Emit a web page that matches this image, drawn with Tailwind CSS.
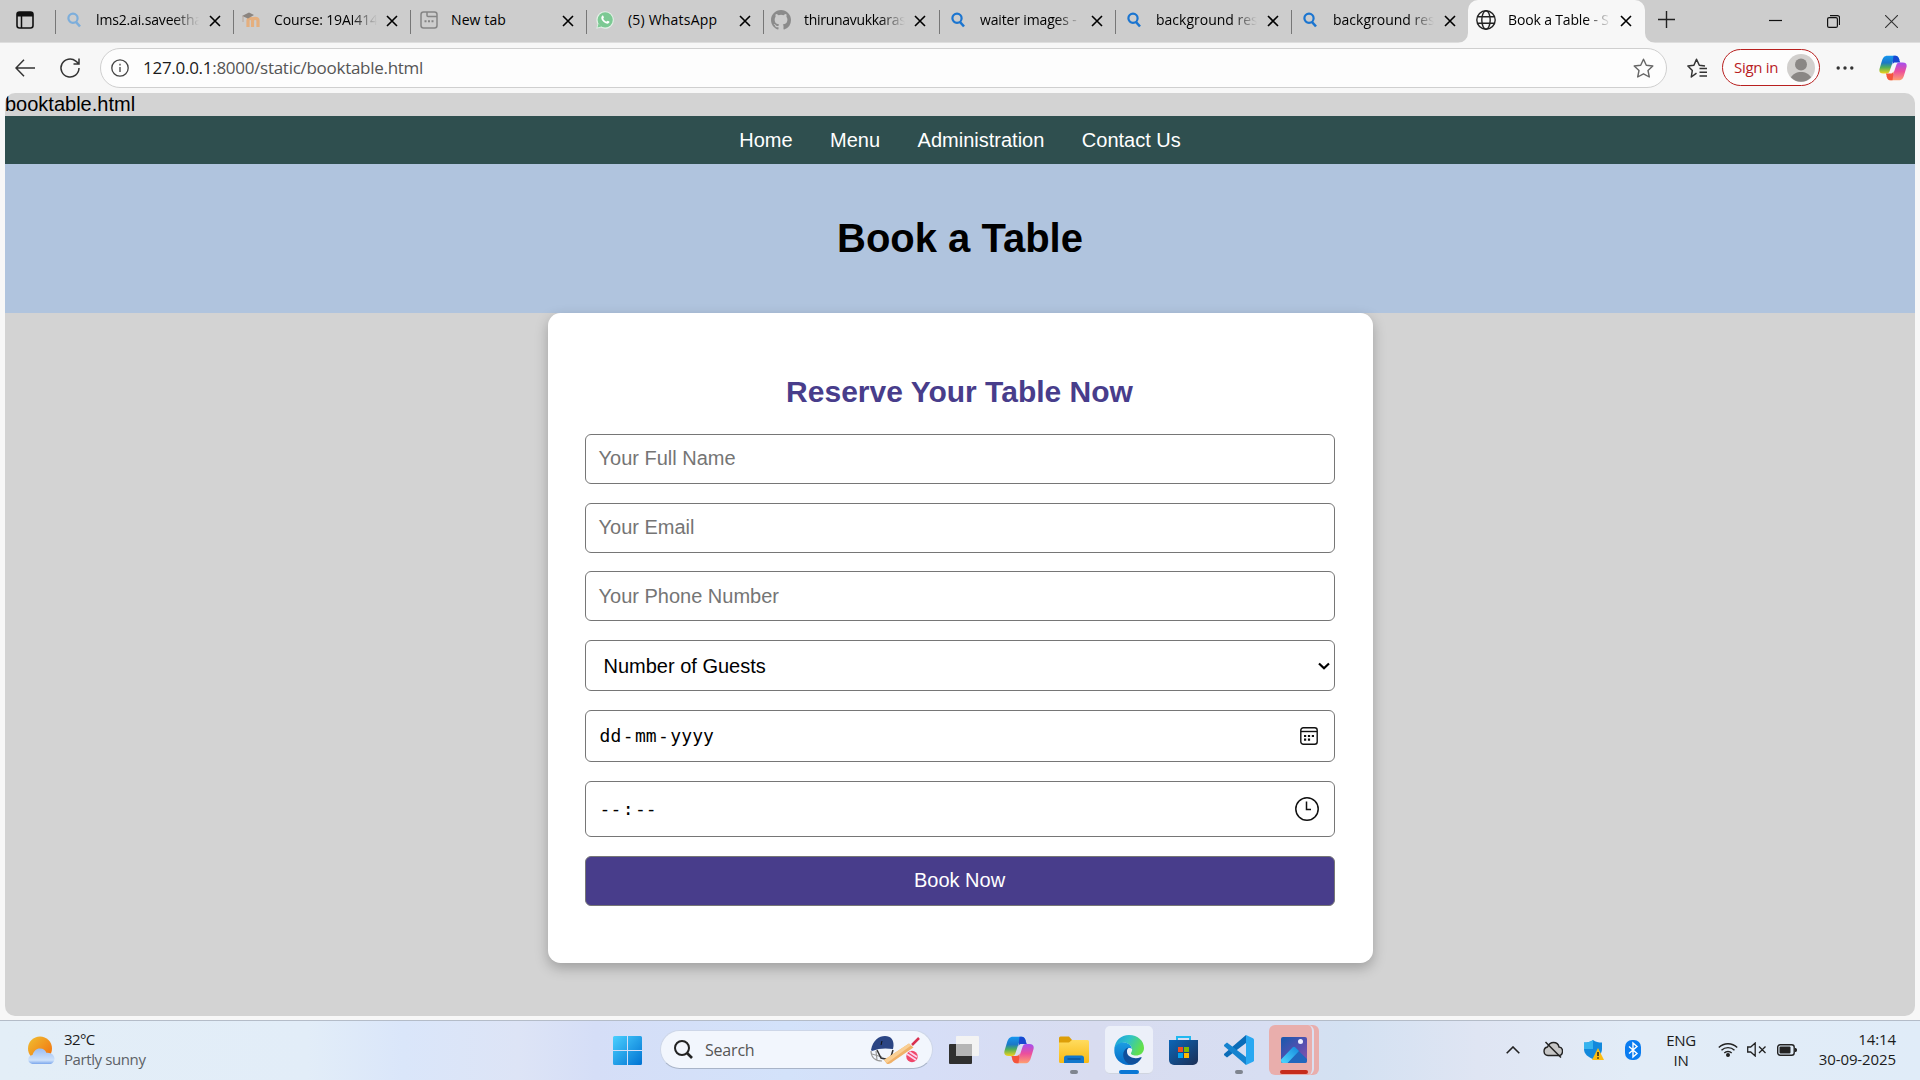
<!DOCTYPE html>
<html lang="en">
<head>
<meta charset="utf-8">
<title>Book a Table</title>
<script src="https://cdn.jsdelivr.net/npm/@tailwindcss/browser@4"></script>
</head>
<body class="w-[1920px] h-[1080px] overflow-hidden bg-[#f7f7f7] flex flex-col font-['Open_Sans','Noto_Sans',sans-serif] text-black">
<svg class="absolute size-0">
  <defs>
    <linearGradient id="cpA" x1="0" y1="0" x2="0" y2="1"><stop offset="0" stop-color="#1597f0"/><stop offset=".4" stop-color="#1b78c8"/><stop offset=".65" stop-color="#4fae5a"/><stop offset="1" stop-color="#f3d21b"/></linearGradient>
    <linearGradient id="cpB" x1="0" y1="0" x2="0" y2="1"><stop offset="0" stop-color="#a44ff0"/><stop offset=".5" stop-color="#ec4f9c"/><stop offset="1" stop-color="#ffa070"/></linearGradient>
    <linearGradient id="edA" x1="0" y1="0" x2="1" y2=".4"><stop offset="0" stop-color="#1a9be0"/><stop offset=".5" stop-color="#2fc2c8"/><stop offset="1" stop-color="#62e04c"/></linearGradient>
    <linearGradient id="edB" x1="0" y1="0" x2="0" y2="1"><stop offset="0" stop-color="#1b9de2"/><stop offset="1" stop-color="#0669c6"/></linearGradient>
    <linearGradient id="win" x1="0" y1="0" x2="1" y2="1"><stop offset="0" stop-color="#4ad0ff"/><stop offset="1" stop-color="#0072d2"/></linearGradient>
    <linearGradient id="sun" x1="0" y1="0" x2="1" y2="1"><stop offset="0" stop-color="#f0c032"/><stop offset="1" stop-color="#f26a0c"/></linearGradient>
    <linearGradient id="cld" x1="0" y1="0" x2="0" y2="1"><stop offset="0" stop-color="#9bbdf4"/><stop offset=".75" stop-color="#cfe2fb"/><stop offset="1" stop-color="#7ba6ec"/></linearGradient>
    <linearGradient id="fld" x1="0" y1="0" x2="0" y2="1"><stop offset="0" stop-color="#ffdb5e"/><stop offset="1" stop-color="#f9b912"/></linearGradient>
    <linearGradient id="sto" x1="0" y1="0" x2="1" y2="1"><stop offset="0" stop-color="#0b66b8"/><stop offset="1" stop-color="#1c2f55"/></linearGradient>
    <linearGradient id="pho" x1="0" y1="0" x2="1" y2="1"><stop offset="0" stop-color="#1559ad"/><stop offset=".6" stop-color="#5b4fb0"/><stop offset="1" stop-color="#8c55a8"/></linearGradient>
    <linearGradient id="mtn" x1="0" y1="1" x2="1" y2="0"><stop offset="0" stop-color="#4fd9ff"/><stop offset="1" stop-color="#1487dc"/></linearGradient>
    <symbol id="x" viewBox="0 0 12 12"><path d="M1 1l10 10M11 1L1 11" stroke="currentColor" stroke-width="1.6" fill="none"/></symbol>
    <symbol id="mag" viewBox="0 0 16 16"><circle cx="7" cy="6.2" r="4.6" fill="none" stroke="currentColor" stroke-width="2.2"/><path d="M10 10l4 4.5" stroke="currentColor" stroke-width="2.6"/></symbol>
    <symbol id="copilot" viewBox="0 0 30 28">
      <path d="M22 5.500C21.300 2.500 20 .7 17.500.7H9C5.500.7 4 3 3 6.500L.6 14.500C-.4 18 1 20 4.500 20H8c2 0 3-1.200 3.600-3.300L14.500 8c.6-1.800 1.500-2.500 3.500-2.500z" fill="url(#cpA)"/>
      <path d="M15.500.7h2C20 .7 21.300 2.500 22 6l.8 2h-5c-2 0-2.700.6-3.300 2.400z" fill="#1747d1"/>
      <path d="M8 22.500c.7 3 2 4.800 4.500 4.800H21c3.500 0 5-2.300 6-5.800l2.400-8C30.400 10 29 8 25.500 8H22c-2 0-3 1.200-3.600 3.300L15.500 20c-.6 1.800-1.500 2.500-3.500 2.500z" fill="url(#cpB)"/>
      <path d="M14.500 27.300h-2C10 27.300 8.700 25.500 8 22l-.6-2H12c2 0 2.900-.8 3.500-2.500L15.500 20z" fill="#f4543c"/>
    </symbol>
  </defs>
</svg>

<!-- tab strip -->
<header class="h-[43px] shrink-0 bg-[#cdcdcd] border-b border-[#dedede] flex text-[14px] tracking-[-0.15px]">
  <div class="w-[55px] flex items-center pl-4 pb-[2px]">
    <svg class="size-[18px]" viewBox="0 0 18 18"><rect x="1" y="1" width="16" height="16" rx="2.500" fill="none" stroke="#111" stroke-width="1.600"/><path d="M1 5.500V3a2 2 0 0 1 2-2h12a2 2 0 0 1 2 2v2.500z" fill="#111"/><path d="M5.500 5v12" stroke="#111" stroke-width="1.500"/></svg>
  </div>
  <div class="w-[178px] flex items-center pb-[3px]"><i class="w-px h-6 mt-[5px] bg-[#777]"></i><svg class="size-4 ml-[10px] text-[#7daedb]"><use href="#mag"/></svg><span class="ml-[14px] w-[103px] overflow-hidden whitespace-nowrap [mask-image:linear-gradient(90deg,#000_75%,transparent)]">lms2.ai.saveetha</span><svg class="size-3 ml-[10px] mt-[3px]"><use href="#x"/></svg></div>
  <div class="w-[177px] flex items-center pb-[3px]"><i class="w-px h-6 mt-[5px] bg-[#777]"></i>
    <svg class="w-5 h-4 ml-2" viewBox="0 0 20 16"><path d="M6 15V8.500c0-2.800 4.500-2.800 4.500 0V15m0-6.500c0-2.800 5.500-2.800 5.500 0V15" fill="none" stroke="#e5af7e" stroke-width="3.200"/><path d="M0 4l7-3.500L12 3 6 6.500z" fill="#8b8580"/><path d="M1 4v6" stroke="#b9a79a" stroke-width="1"/></svg>
    <span class="ml-[12px] w-[103px] overflow-hidden whitespace-nowrap [mask-image:linear-gradient(90deg,#000_75%,transparent)]">Course: 19AI414</span><svg class="size-3 ml-[9px] mt-[3px]"><use href="#x"/></svg></div>
  <div class="w-[176px] flex items-center pb-[3px]"><i class="w-px h-6 mt-[5px] bg-[#777]"></i>
    <svg class="size-[18px] ml-[9px]" viewBox="0 0 18 18" fill="none" stroke="#858585" stroke-width="1.500"><rect x="1" y="1" width="16" height="16" rx="2.500"/><path d="M7 1v3.500a1 1 0 0 0 1 1h9"/><path d="M4.500 10.300h2m1.500 0h2m1.500 0h2" stroke-width="2"/></svg>
    <span class="ml-[13px] w-[103px] tracking-[0.1px]">New tab</span><svg class="size-3 ml-[8px] mt-[3px]"><use href="#x"/></svg></div>
  <div class="w-[177px] flex items-center pb-[3px]"><i class="w-px h-6 mt-[5px] bg-[#777]"></i>
    <svg class="size-[18px] ml-[9px]" viewBox="0 0 18 18"><path d="M.3 17.700l1.200-4.400A8.700 8.700 0 1 1 4.800 16.600z" fill="#e4f1e7"/><circle cx="9.200" cy="8.800" r="7.600" fill="#7cc993"/><path d="M1.500 16.500l1-4 3 3z" fill="#7cc993"/><path d="M6 5c.8-.9 1.400-.3 1.900 1.300.2.700-.9 1-.5 1.700.7 1.300 1.700 2.100 2.900 2.600.7.200.9-1.100 1.500-.9 1.600.7 2 1 1.500 1.900-1 1.800-3.500 1-5.300-.4C5.800 9.400 4.400 6.900 6 5z" fill="#fff"/></svg>
    <span class="ml-[14px] w-[103px] whitespace-nowrap tracking-[0.2px]">(5) WhatsApp</span><svg class="size-3 ml-[8px] mt-[3px]"><use href="#x"/></svg></div>
  <div class="w-[176px] flex items-center pb-[3px]"><i class="w-px h-6 mt-[5px] bg-[#777]"></i>
    <svg class="size-5 ml-[7px]" viewBox="0 0 16 16" fill="#8b8b8b"><path d="M8 0C3.580 0 0 3.580 0 8c0 3.540 2.290 6.530 5.470 7.590.4.070.55-.17.55-.38 0-.19-.01-.82-.01-1.490-2.010.37-2.530-.49-2.690-.94-.09-.23-.48-.94-.82-1.130-.28-.15-.68-.52-.01-.53.63-.01 1.080.58 1.230.82.72 1.210 1.870.87 2.330.66.07-.52.28-.87.51-1.070-1.780-.2-3.640-.89-3.640-3.950 0-.87.31-1.590.82-2.150-.08-.2-.36-1.020.08-2.120 0 0 .67-.21 2.200.82a7.600 7.600 0 0 1 4 0c1.530-1.040 2.200-.82 2.200-.82.44 1.100.16 1.920.08 2.120.51.56.82 1.270.82 2.150 0 3.070-1.870 3.750-3.650 3.950.29.25.54.73.54 1.480 0 1.070-.01 1.930-.01 2.200 0 .21.15.46.55.38A8 8 0 0 0 16 8c0-4.420-3.580-8-8-8z"/></svg>
    <span class="ml-[13px] w-[101px] overflow-hidden whitespace-nowrap tracking-[-0.3px] [mask-image:linear-gradient(90deg,#000_75%,transparent)]">thirunavukkaras</span><svg class="size-3 ml-[9px] mt-[3px]"><use href="#x"/></svg></div>
  <div class="w-[176px] flex items-center pb-[3px]"><i class="w-px h-6 mt-[5px] bg-[#777]"></i><svg class="size-4 ml-[10px] text-[#1b75d0]"><use href="#mag"/></svg><span class="ml-[14px] w-[101px] overflow-hidden whitespace-nowrap [mask-image:linear-gradient(90deg,#000_75%,transparent)]">waiter images -</span><svg class="size-3 ml-[10px] mt-[3px]"><use href="#x"/></svg></div>
  <div class="w-[176px] flex items-center pb-[3px]"><i class="w-px h-6 mt-[5px] bg-[#777]"></i><svg class="size-4 ml-[10px] text-[#1b75d0]"><use href="#mag"/></svg><span class="ml-[14px] w-[101px] overflow-hidden whitespace-nowrap tracking-[0px] [mask-image:linear-gradient(90deg,#000_75%,transparent)]">background res</span><svg class="size-3 ml-[10px] mt-[3px]"><use href="#x"/></svg></div>
  <div class="w-[177px] flex items-center pb-[3px]"><i class="w-px h-6 mt-[5px] bg-[#777]"></i><svg class="size-4 ml-[10px] text-[#1b75d0]"><use href="#mag"/></svg><span class="ml-[15px] w-[101px] overflow-hidden whitespace-nowrap tracking-[0px] [mask-image:linear-gradient(90deg,#000_75%,transparent)]">background res</span><svg class="size-3 ml-[10px] mt-[3px]"><use href="#x"/></svg></div>
  <div class="w-[177px] h-[43px] flex items-center pb-[4px] bg-[#f7f7f7] rounded-t-[10px] relative">
    <svg class="absolute -left-[10px] bottom-0 size-[10px]" viewBox="0 0 10 10"><path d="M10 0v10H0A10 10 0 0 0 10 0z" fill="#f7f7f7"/></svg>
    <svg class="absolute -right-[10px] bottom-0 size-[10px]" viewBox="0 0 10 10"><path d="M0 0v10h10A10 10 0 0 1 0 0z" fill="#f7f7f7"/></svg>
    <svg class="size-5 ml-2" viewBox="0 0 20 20" fill="none" stroke="#222" stroke-width="1.400"><circle cx="10" cy="10" r="9.200"/><ellipse cx="10" cy="10" rx="4.200" ry="9.200"/><path d="M1.500 6.800h17M1.500 13.200h17"/></svg>
    <span class="ml-[12px] w-[103px] overflow-hidden whitespace-nowrap [mask-image:linear-gradient(90deg,#000_75%,transparent)]">Book a Table - S</span><svg class="size-3 ml-[9px] mt-[3px]"><use href="#x"/></svg></div>
  <svg class="size-[17px] ml-[13px] mt-[11px]" viewBox="0 0 17 17" stroke="#222" stroke-width="1.400"><path d="M8.500 0v17M0 8.500h17"/></svg>
  <div class="ml-auto mr-[22px] flex gap-[45px] items-start pt-[15px]">
    <svg class="size-[13px]" viewBox="0 0 13 13" stroke="#111" stroke-width="1.200"><path d="M0 5.500h13"/></svg>
    <svg class="size-[13px]" viewBox="0 0 13 13" stroke="#111" fill="none" stroke-width="1.200"><rect x=".6" y="2.600" width="9.800" height="9.800" rx="1.500"/><path d="M3 .6h7.500a2 2 0 0 1 2 2V10"/></svg>
    <svg class="size-[13px]" viewBox="0 0 13 13" stroke="#333" stroke-width="1.100"><path d="M0 0l13 13M13 0L0 13"/></svg>
  </div>
</header>

<!-- toolbar -->
<div class="h-[50px] shrink-0 flex items-center">
  <svg class="w-5 h-[18px] ml-[15px]" viewBox="0 0 20 18" fill="none" stroke="#333" stroke-width="1.500"><path d="M20 9H1M9 .8L1 9l8 8.200"/></svg>
  <svg class="size-[22px] ml-6" viewBox="0 0 22 22" fill="none" stroke="#333" stroke-width="1.500"><path d="M20 11a9 9 0 1 1-3.200-6.900L20 6.800M20 1.500v5.500h-5.500"/></svg>
  <div class="ml-[19px] w-[1567px] h-10 rounded-full bg-[#fdfdfd] border border-[#cfcfcf] flex items-center pl-[10px] pr-[12px]">
    <svg class="size-[18px]" viewBox="0 0 18 18" fill="none" stroke="#444" stroke-width="1.300"><circle cx="9" cy="9" r="8.200"/><path d="M9 8v5M9 4.800v1.600"/></svg>
    <span class="ml-[14px] pb-[2px] text-[17px] tracking-[-0.28px] text-[#555] leading-none"><span class="text-[#1a1a1a]">127.0.0.1</span>:8000/static/booktable.html</span>
    <svg class="size-[21px] ml-auto" viewBox="0 0 21 21" fill="none" stroke="#666" stroke-width="1.400" stroke-linejoin="round"><path d="M10.500 1.200l2.800 6 6.500.8-4.800 4.500 1.300 6.500-5.800-3.200L4.700 19 6 12.500 1.200 8l6.500-.8z"/></svg>
  </div>
  <svg class="w-[21px] h-5 ml-[20px]" viewBox="0 0 21 20" fill="none" stroke="#333" stroke-width="1.500" stroke-linejoin="round"><path d="M9.500 15.200L4.300 19l1-6.500L.9 8l6-.8L9.500 1.200l2.800 6L18 8M12.500 10.500H20M12.500 14.200H20M12.500 18H20"/></svg>
  <div class="ml-[14px] mb-[1px] w-[98px] h-[37px] rounded-full border-[1.500px] border-[#b8201f] bg-[#fdfdfd] flex items-center pl-[11px] text-[#b8201f] text-[15px] tracking-[-0.3px]">Sign in
    <svg class="size-7 ml-auto mr-[4px]" viewBox="0 0 28 28"><circle cx="14" cy="14" r="14" fill="#d1cfcd"/><circle cx="14" cy="10.500" r="6" fill="#8a8785"/><path d="M4 23.500c3-7.500 17-7.500 20 0a14 14 0 0 1-20 0z" fill="#8a8785"/></svg></div>
  <svg class="w-[18px] h-1 ml-[16px]" viewBox="0 0 18 4" fill="#333"><circle cx="2.200" cy="2" r="1.700"/><circle cx="9" cy="2" r="1.700"/><circle cx="15.800" cy="2" r="1.700"/></svg>
  <svg class="w-[28px] h-[26px] ml-[25px]"><use href="#copilot"/></svg>
</div>

<!-- page -->
<main class="mx-[5px] h-[923px] shrink-0 rounded-[10px] overflow-hidden bg-[#d3d3d3] font-['Liberation_Sans',Arial,sans-serif] text-[20px] leading-[23px] flex flex-col items-center">
  <div class="w-full h-[23px]">booktable.html</div>
  <nav class="w-full h-12 bg-[#2f4f4f] text-white flex items-center justify-center gap-[37.500px]"><span>Home</span><span>Menu</span><span>Administration</span><span>Contact Us</span></nav>
  <div class="w-full h-[149px] pb-[2px] bg-[#b0c4de] flex items-center justify-center text-[40px] leading-[46px] font-bold">Book a Table</div>
  <section class="w-[825px] h-[650px] rounded-[12.500px] bg-white shadow-[0_5px_12.500px_rgba(0,0,0,0.25)] pl-[37px] pr-[38px] pt-[62px] flex flex-col">
    <h2 class="text-center text-[30px] leading-[34px] font-bold text-[#483d8b] mb-[25px]">Reserve Your Table Now</h2>
    <div class="h-[50px] mb-[19px] border border-[#767676] rounded-[6px] flex items-center pl-[13px] pb-[2px] text-[#757575]">Your Full Name</div>
    <div class="h-[50px] mb-[18px] border border-[#767676] rounded-[6px] flex items-center pl-[13px] pb-[2px] text-[#757575]">Your Email</div>
    <div class="h-[50px] mb-[19px] border border-[#767676] rounded-[6px] flex items-center pl-[13px] text-[#757575]">Your Phone Number</div>
    <div class="h-[51px] mb-[19px] border border-[#767676] rounded-[6px] flex items-center pl-[18px] pt-px pr-[4px]">Number of Guests
      <svg class="w-3 h-2 ml-auto" viewBox="0 0 12 8" fill="none" stroke="#000" stroke-width="2.200"><path d="M1 1.500l5 4.800 5-4.800"/></svg></div>
    <div class="h-[52px] mb-[19px] border border-[#767676] rounded-[6px] flex items-center pl-[14px] pr-4 font-['DejaVu_Sans_Mono',monospace] text-[18px] tracking-[0.1px]"><div class="flex pb-[2px]"><span>dd</span><span class="mx-[1.300px]">-</span><span>mm</span><span class="mx-[1.300px]">-</span><span>yyyy</span></div>
      <svg class="size-[18px] ml-auto" viewBox="0 0 18 18" fill="none" stroke="#111" stroke-width="1.400"><rect x=".8" y=".8" width="16.400" height="16.400" rx="2.500"/><path d="M1 4.500h16"/><path d="M4 9h2.200m1.700 0h2.200m1.700 0H14M4 12.600h2.200m1.700 0h2.200" stroke-width="2.200"/></svg></div>
    <div class="h-[56px] mb-[19px] border border-[#767676] rounded-[6px] flex items-center pl-[14px] pr-[15px] font-['DejaVu_Sans_Mono',monospace] text-[18px] tracking-[0.1px]"><div class="flex pb-[2px]"><span>--</span><span class="mx-[1.300px]">:</span><span>--</span></div>
      <svg class="size-6 ml-auto" viewBox="0 0 24 24" fill="none" stroke="#111" stroke-width="1.500"><circle cx="12" cy="12" r="11.200"/><path d="M11.500 4.500v8H16"/></svg></div>
    <div class="h-[50px] border border-[#767676] rounded-[6px] bg-[#483d8b] text-white flex items-center justify-center pb-[2px]">Book Now</div>
  </section>
</main>

<!-- taskbar -->
<footer class="mt-1 h-[60px] shrink-0 border-t border-[#b4bcc8] bg-[linear-gradient(90deg,#e3eef7_0%,#e2edf8_16%,#dae6fa_21%,#dde4f6_27%,#d5def7_31%,#d3e2fa_41%,#d6def7_48%,#d8dcf0_57%,#d7def2_66%,#d3e1f2_70%,#dfe5f3_77%,#e2ecf7_85%,#e0ecf8_100%)] flex text-[15px] leading-5 text-[#1c1c1c]">
  <svg class="w-7 h-7 ml-[27px] mt-[15px]" viewBox="0 0 28 28"><circle cx="13" cy="12.500" r="12" fill="url(#sun)"/><path d="M6 28a4.500 4.500 0 0 1-.5-9C7 15 9 12.500 13 12.500c3.500 0 5.500 2 6.300 4.200 5-.6 8.200 2.500 8.200 5.800 0 3.500-2.500 5.500-5 5.500z" fill="url(#cld)"/></svg>
  <div class="ml-[9px] pt-[8px] w-[549px]"><div class="tracking-[-0.6px]">32°C</div><div class="text-[#5c6166] tracking-[-0.4px]">Partly sunny</div></div>
  <svg class="size-[29px] mt-[15px]" viewBox="0 0 29 29" fill="url(#win)"><path d="M0 1.500A1.500 1.500 0 0 1 1.500 0H14v14H0zM15 0h12.500A1.500 1.500 0 0 1 29 1.500V14H15zM0 15h14v14H1.500A1.500 1.500 0 0 1 0 27.500zM15 15h14v12.500a1.500 1.500 0 0 1-1.500 1.500H15z"/></svg>
  <div class="ml-[18px] mt-[9px] w-[273px] h-[39px] rounded-full bg-[#f2f6fd] border border-[#cdd6e8] border-b-[#a9b4c8] flex items-center pl-[13px] pr-3 text-[16px] text-[#555] tracking-[-0.2px]">
    <svg class="size-[19px]" viewBox="0 0 19 19" fill="none" stroke="#222"><circle cx="8" cy="8" r="7" stroke-width="2"/><path d="M13 13l5 5" stroke-width="2.600"/></svg>
    <span class="ml-[12px]">Search</span>
    <svg class="w-[50px] h-[30px] ml-auto" viewBox="0 0 50 30"><path d="M1 16c0 6 4 10 11 10M2 19l10 3M6 16l1 9" stroke="#9a9a9a" fill="none" stroke-width="1.200"/><path d="M7 15l4 8 9 2 3-10" stroke="#333" fill="none" stroke-width="1.500"/><path d="M1 15C3 5 9 1 15 1c6 0 9 4 8.500 10L23 14c-7-1-14-1-21 2z" fill="#2b4584"/><path d="M12 6l-1 4" stroke="#111"/><path d="M42 10l7-7" stroke="#d8304f" stroke-width="2.500"/><path d="M39 8.500l4.500 4L23 26.500c-2 2-4 2.500-6 2.500l-3-4z" fill="#f0b168"/><path d="M39 8.500l2 2L17 28l-3-3z" fill="#f9cf94"/><circle cx="42" cy="21.500" r="5.700" fill="#f0466a"/><path d="M37 19l9 6M39.500 17l7.500 5" stroke="#fbd3ee" stroke-width="1.800"/></svg>
  </div>
  <svg class="w-[30px] h-7 ml-4 mt-[15px]" viewBox="0 0 30 28"><rect x="0" y="8" width="23" height="20" rx="1" fill="#30302f"/><rect x="7" y="0" width="23" height="20" rx="1" fill="#f3f3f3"/><path d="M7 8h16v12H7z" fill="#b5b5b5"/></svg>
  <svg class="w-[30px] h-7 ml-[25px] mt-[15px]"><use href="#copilot"/></svg>
  <div class="ml-[25px] mt-[15px] w-[30px] h-11 relative">
    <svg class="w-[30px] h-7" viewBox="0 0 30 28"><path d="M0 2a1.500 1.500 0 0 1 1.500-1.500H10L13 4v4H0z" fill="#dd9e08"/><path d="M0 6.500h10l3-2.500h15.500A1.500 1.500 0 0 1 30 5.500v20a1.500 1.500 0 0 1-1.500 1.500h-27A1.500 1.500 0 0 1 0 25.500z" fill="url(#fld)"/><path d="M5 27v-5a2.500 2.500 0 0 1 2.500-2.500h15A2.500 2.500 0 0 1 25 22v5z" fill="#1277cc"/><path d="M8.500 23h13" stroke="#0b4f94" stroke-width="1.300"/></svg>
    <i class="absolute left-[11px] top-[34px] w-2 h-1 rounded-full bg-[#7f858f]"></i></div>
  <div class="ml-4 mt-[5px] w-12 h-[48px] rounded-[5px] bg-[#ecf0f9] border-b border-[#d0d5e0] relative">
    <svg class="size-[30px] ml-[9px] mt-[9px]" viewBox="0 0 30 30"><path d="M.3 14C1 5.500 7 0 15 0c9 0 15 6 15 13 0 5-4 7.500-8 7.500-3.500 0-5.500-1.200-5-2.500 1-2 1.500-3 .8-5C16.500 9 12 7 8 8 4.500 8.800 1.500 11 .3 14z" fill="url(#edA)"/><path d="M.3 15C.5 10 5 7.500 9.500 7.500c5 0 8 3 8.400 6.500-2.500-2.500-6 0-5.700 4 .4 6 6 10 12.800 8.500-3 2.500-6 3.500-10 3.500C6 30 0 23 .3 15z" fill="url(#edB)"/><path d="M14.500 12.200c-5 2-6.500 7-4.500 11.500 2 4.500 6.500 6.800 10.500 5.300 3.500-1.300 6-4 7-6 .5-1-.3-1-1-.7-5.500 2.200-13 .2-13.500-5.300-.1-2 .3-3.500 1.500-4.800z" fill="#11509c"/></svg>
    <i class="absolute left-[14px] bottom-[-1px] w-5 h-1 rounded-full bg-[#0a77d5]"></i></div>
  <svg class="w-[29px] h-[30px] ml-4 mt-[14px]" viewBox="0 0 29 30"><path d="M8 6V2h13v4" fill="none" stroke="#22b8f0" stroke-width="2"/><path d="M0 5h29v20a5 5 0 0 1-5 5H5a5 5 0 0 1-5-5z" fill="url(#sto)"/><path fill="#f25022" d="M9 12h5v5H9z"/><path fill="#7fba00" d="M15 12h5v5h-5z"/><path fill="#00a4ef" d="M9 18h5v5H9z"/><path fill="#ffb900" d="M15 18h5v5h-5z"/></svg>
  <div class="ml-[26px] mt-[14px] w-[30px] h-11 relative">
    <svg class="size-[30px]" viewBox="0 0 30 30"><path d="M22 8L3 22.500l-2.500-2c-.8-.7-.6-1.500 0-2L22 0z" fill="#0a6cb8"/><path d="M22 22L3 7.500.500 9.500c-.8.700-.6 1.500 0 2L22 30z" fill="#1583cf"/><path d="M22 0l7 3.200c.7.400 1 .9 1 1.600v20.400c0 .7-.3 1.200-1 1.600L22 30z" fill="#29a8f2"/></svg>
    <i class="absolute left-[11px] top-[35px] w-2 h-1 rounded-full bg-[#7f858f]"></i></div>
  <div class="ml-[15px] mt-1 w-[50px] h-[50px] relative">
    <div class="absolute right-0 top-0 w-3 h-[50px] rounded-r-[6px] bg-[#e9aeac]"></div>
    <div class="absolute left-0 top-0 w-[45px] h-[50px] rounded-[6px] bg-[#e9aeac] border-r-2 border-[#dce0f0]"></div>
    <svg class="absolute left-3 top-3 size-[26px]" viewBox="0 0 26 26"><rect width="26" height="26" rx="2" fill="url(#pho)"/><circle cx="19.500" cy="4.500" r="2.500" fill="#eef"/><path d="M0 23l11.500-12a2 2 0 0 1 3 0L26 22v2a2 2 0 0 1-2 2H2a2 2 0 0 1-2-2z" fill="#2167bd"/><path d="M0 22.500l11.500-12a2 2 0 0 1 3 0l3.500 3.500L6.500 26H2a2 2 0 0 1-2-2z" fill="url(#mtn)"/></svg>
    <i class="absolute left-[11px] bottom-[1px] w-7 h-1 rounded-full bg-[#c62b1c]"></i>
  </div>
  <div class="ml-auto mr-6 flex h-[59px]">
    <svg class="w-[14px] h-2 mt-[25px]" viewBox="0 0 14 8" fill="none" stroke="#222" stroke-width="1.600"><path d="M.7 7.300L7 1l6.300 6.300"/></svg>
    <svg class="w-5 h-[17px] ml-[23px] mt-[20px]" viewBox="0 0 20 17"><path d="M5 14.500a4.300 4.300 0 0 1-.5-8.500C6 2.500 8 1.500 10.500 1.500c3 0 5 2 5.500 4.500 5 .5 4.500 8.500-.5 8.500z" fill="#c6c6c6" stroke="#222" stroke-width="1.400"/><path d="M2.500 1l15.500 15.500" stroke="#222" stroke-width="1.500"/></svg>
    <svg class="w-5 h-5 ml-[21px] mt-[19px]" viewBox="0 0 20 20"><path d="M9 0c2.500 2 5.500 2.500 9 2.500V9c0 5-4 8-9 10-5-2-9-5-9-10V2.500C3.500 2.500 6.500 2 9 0z" fill="#1389dc"/><path d="M9 0v9H0V2.500C3.500 2.500 6.500 2 9 0z" fill="#35b3ee"/><path d="M14 8l6 12H8z" fill="#fdbd10"/><path d="M14 12v4M14 17.200v1.600" stroke="#222" stroke-width="1.500"/></svg>
    <svg class="w-4 h-5 ml-[21px] mt-[19px]" viewBox="0 0 16 20"><rect width="16" height="20" rx="7" fill="#0a7cf0"/><path d="M4 6.500l8 7L8 17V3l4 3.500-8 7" fill="none" stroke="#fff" stroke-width="1.400"/></svg>
    <div class="ml-[25px] pt-[9px] w-[30px] text-center tracking-[-0.3px]">ENG<br>IN</div>
    <svg class="w-5 h-[15px] ml-[22px] mt-[21px]" viewBox="0 0 20 15" fill="none" stroke="#222" stroke-width="1.400"><path d="M.8 5.500a13 13 0 0 1 18.400 0M3.500 8.300a9.200 9.200 0 0 1 13 0M6.300 11a5.300 5.300 0 0 1 7.400 0"/><circle cx="10" cy="13" r="1.300" fill="#222"/></svg>
    <svg class="w-5 h-[15px] ml-[9px] mt-[21px]" viewBox="0 0 20 15" fill="none" stroke="#222" stroke-width="1.300"><path d="M.7 5v5h3l4.500 4V1L3.700 5zM12 4.500l6.500 6.500M18.500 4.500L12 11"/></svg>
    <svg class="w-5 h-3 ml-[10px] mt-[23px]" viewBox="0 0 20 12"><rect x=".7" y=".7" width="16.500" height="10.600" rx="2.500" fill="none" stroke="#222" stroke-width="1.400"/><rect x="2.500" y="2.500" width="11" height="7" rx="1" fill="#222"/><path d="M18 4h.5c2 0 2 4 0 4H18z" fill="#222"/></svg>
    <div class="ml-[21px] pt-[8px] w-[78px] tracking-[-0.1px] whitespace-nowrap flex flex-col items-end"><div>14:14</div><div>30-09-2025</div></div>
  </div>
</footer>
</body>
</html>
